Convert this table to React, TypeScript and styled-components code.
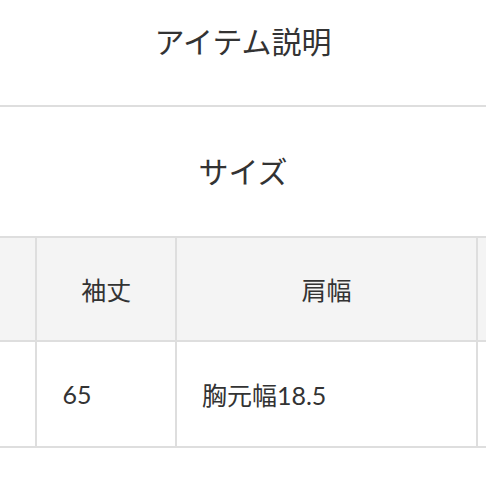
import React from 'react';
import styled, { createGlobalStyle } from 'styled-components';

const GlobalStyle = createGlobalStyle`
  html, body {
    margin: 0;
    padding: 0;
    background: #ffffff;
  }
  body {
    font-family: Lato, "Noto Sans CJK JP", sans-serif;
    color: #333333;
    overflow: hidden;
  }
`;

const Page = styled.div`
  width: 486px;
  height: 486px;
  overflow: hidden;
`;

const Title = styled.h2`
  margin: 0;
  padding: 21px 0 44px;
  font-size: 30px;
  font-weight: 400;
  line-height: 40px;
  text-align: center;
  border-bottom: 2px solid #dedede;
`;

const SectionTitle = styled.h3`
  margin: 44px 0 45px;
  font-size: 30px;
  font-weight: 400;
  line-height: 40px;
  text-align: center;
`;

const SizeTable = styled.table`
  border-collapse: collapse;
  table-layout: fixed;
  width: 740px;
  margin-left: -100px;
`;

const Col = styled.col<{ $width: number }>`
  width: ${({ $width }) => $width}px;
`;

const HeadCell = styled.th`
  height: 102px;
  padding: 0;
  border: 2px solid #dedede;
  background: #f4f4f4;
  font-size: 25px;
  font-weight: 400;
  text-align: center;
  vertical-align: middle;
`;

const Cell = styled.td`
  height: 104px;
  padding: 0 0 0 25px;
  border: 2px solid #dedede;
  font-size: 25px;
  text-align: left;
  vertical-align: middle;
`;

const columns = [
  { label: '', width: 134 },
  { label: '袖丈', width: 138 },
  { label: '肩幅', width: 298 },
  { label: '', width: 160 },
];

const values = ['', '65', '胸元幅18.5', ''];

const App: React.FC = () => {
  return (
    <Page>
      <GlobalStyle />
      <Title>アイテム説明</Title>
      <SectionTitle>サイズ</SectionTitle>
      <SizeTable>
        <colgroup>
          {columns.map((col, i) => (
            <Col key={i} $width={col.width} />
          ))}
        </colgroup>
        <thead>
          <tr>
            {columns.map((col, i) => (
              <HeadCell key={i}>{col.label}</HeadCell>
            ))}
          </tr>
        </thead>
        <tbody>
          <tr>
            {values.map((v, i) => (
              <Cell key={i}>{v}</Cell>
            ))}
          </tr>
        </tbody>
      </SizeTable>
    </Page>
  );
};

export default App;
